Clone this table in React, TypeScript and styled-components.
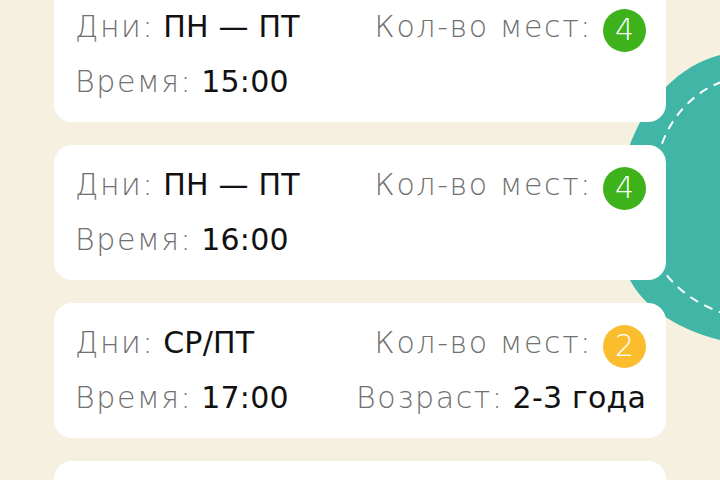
import React from 'react'
import styled, { createGlobalStyle } from 'styled-components'

const Global = createGlobalStyle`
  html, body {
    margin: 0;
    padding: 0;
    background: #f6f0e0;
    overflow: hidden;
  }
  body {
    font-family: 'DejaVu Sans', 'Noto Sans', sans-serif;
  }
`

const Page = styled.div`
  position: relative;
  width: 720px;
  height: 480px;
  overflow: hidden;
  background: #f6f0e0;
`

const Blob = styled.svg`
  position: absolute;
  left: 600px;
  top: 40px;
`

const List = styled.div`
  position: relative;
  display: flex;
  flex-direction: column;
  gap: 23px;
  width: 612px;
  margin: -13px 0 0 54px;
`

const Card = styled.div`
  box-sizing: border-box;
  height: 135px;
  padding: 21px 20px 0 21px;
  background: #fff;
  border-radius: 18px;
  display: grid;
  grid-template-columns: 1fr auto;
  grid-template-rows: 44px 44px;
  row-gap: 11px;
`

interface CellProps {
  right?: boolean
}

const Cell = styled.div<CellProps>`
  display: flex;
  align-items: center;
  justify-content: ${p => (p.right ? 'flex-end' : 'flex-start')};
  gap: 9px;
  font-size: 30px;
  line-height: 40px;
  white-space: nowrap;
`

const Label = styled.span`
  color: #707070;
  font-weight: 200;
  letter-spacing: 1.6px;
  margin-bottom: 6px;
`

const Value = styled.span`
  color: #111;
  font-weight: 400;
  letter-spacing: 0.2px;
  margin-bottom: 6px;
`

interface BadgeProps {
  tone: 'green' | 'yellow'
}

const Badge = styled.span<BadgeProps>`
  width: 43px;
  height: 43px;
  margin-left: 2px;
  border-radius: 50%;
  display: flex;
  align-items: center;
  justify-content: center;
  background: ${p => (p.tone === 'green' ? '#3db21b' : '#fbbd2e')};
  color: #fff;
  font-size: 30px;
  font-weight: 200;
  line-height: 1;
`

interface Slot {
  days: string
  time: string
  seats: number
  age?: string
}

const slots: Slot[] = [
  { days: 'ПН — ПТ', time: '15:00', seats: 4 },
  { days: 'ПН — ПТ', time: '16:00', seats: 4 },
  { days: 'СР/ПТ', time: '17:00', seats: 2, age: '2-3 года' },
  { days: 'ПН — ПТ', time: '18:00', seats: 4 },
]

const App: React.FC = () => (
  <Page>
    <Global />
    <Blob width="120" height="320" viewBox="600 40 120 320">
      <path
        d="M 720 55 C 680 65, 645 100, 628 150 C 615 195, 615 250, 630 280 C 645 310, 685 332, 720 340 L 730 340 L 730 55 Z"
        fill="#41b6a7"
      />
      <path
        d="M 722 82 C 697 90, 670 115, 660 150 C 650 190, 650 240, 662 268 C 675 290, 700 305, 722 313"
        fill="none"
        stroke="#fff"
        strokeWidth="2"
        strokeDasharray="9 7"
      />
    </Blob>
    <List>
      {slots.map((s, i) => (
        <Card key={i}>
          <Cell>
            <Label>Дни:</Label>
            <Value>{s.days}</Value>
          </Cell>
          <Cell right>
            <Label>Кол-во мест:</Label>
            <Badge tone={s.seats > 2 ? 'green' : 'yellow'}>{s.seats}</Badge>
          </Cell>
          <Cell>
            <Label>Время:</Label>
            <Value>{s.time}</Value>
          </Cell>
          <Cell right>
            {s.age && (
              <>
                <Label>Возраст:</Label>
                <Value>{s.age}</Value>
              </>
            )}
          </Cell>
        </Card>
      ))}
    </List>
  </Page>
)

export default App
